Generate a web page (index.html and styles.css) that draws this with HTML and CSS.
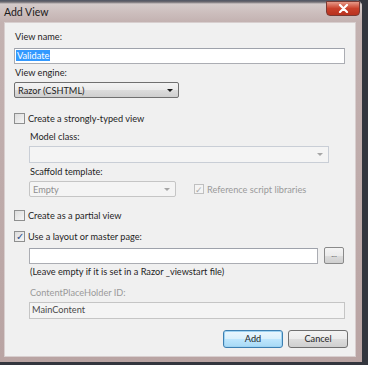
FILE: index.html
```html
<!DOCTYPE html>
<html lang="en">
<head>
    <meta charset="UTF-8">
    <title>Add View</title>
    <link rel="stylesheet" href="styles.css">
</head>
<body>
    <div class="window">
        <div class="titlebar">
            <span class="title">Add View</span>
            <span class="close-btn">
                <svg width="11" height="9" viewBox="0 0 11 9"><path d="M2 1 L9 8 M9 1 L2 8" stroke="#fff" stroke-width="2.2" stroke-linecap="round"/></svg>
            </span>
        </div>
        <div class="client">
            <div class="label lbl-viewname">View name:</div>
            <div class="textbox tb-name"><span class="selected">Validate</span></div>

            <div class="label lbl-engine">View engine:</div>
            <div class="dropdown dd-engine">
                <span>Razor (CSHTML)</span>
                <span class="arrow"></span>
            </div>

            <div class="check-row cr-typed">
                <span class="checkbox"></span>
                <span>Create a strongly-typed view</span>
            </div>

            <div class="indent">
                <div class="label lbl-model">Model class:</div>
                <div class="combo disabled">
                    <span class="arrow light"></span>
                </div>
                <div class="label lbl-scaffold">Scaffold template:</div>
                <div class="scaffold-row">
                    <div class="dropdown dd-scaffold disabled">
                        <span>Empty</span>
                        <span class="arrow light"></span>
                    </div>
                    <div class="check-row dim">
                        <span class="checkbox small checked-dim">&#10003;</span>
                        <span>Reference script libraries</span>
                    </div>
                </div>
            </div>

            <div class="check-row cr-partial">
                <span class="checkbox"></span>
                <span>Create as a partial view</span>
            </div>
            <div class="check-row cr-layout">
                <span class="checkbox checked">&#10003;</span>
                <span>Use a layout or master page:</span>
            </div>

            <div class="indent">
                <div class="layout-row">
                    <div class="textbox tb-layout"></div>
                    <div class="browse-btn">...</div>
                </div>
                <div class="label lbl-hint">(Leave empty if it is set in a Razor _viewstart file)</div>
                <div class="label lbl-cph">ContentPlaceHolder ID:</div>
                <div class="textbox tb-cph">MainContent</div>
            </div>

            <div class="buttons">
                <div class="btn btn-add">Add</div>
                <div class="btn">Cancel</div>
            </div>
        </div>
    </div>
</body>
</html>
```

FILE: styles.css
```css
body {
    margin: 0;
    background: #33363e;
    font-family: Lato, "Noto Sans", sans-serif;
    font-size: 9.2px;
    color: #1e1e1e;
}
.window {
    width: 362px;
    height: 362px;
    background: linear-gradient(to bottom, #c4b3b2, #b9a4a3);
    border-radius: 0 6px 0 0;
    display: flex;
    flex-direction: column;
}
.titlebar {
    height: 22px;
    display: flex;
    align-items: center;
    justify-content: space-between;
    background: linear-gradient(to bottom, #4d5462 0, #6d6a70 2px, #d4cbca 4px, #cdbfbe 12px, #c3b2b1 22px);
    border-radius: 0 6px 0 0;
}
.title {
    margin-left: 4px;
    margin-top: 2px;
    color: #1a1a1a;
    font-size: 10.5px;
}
.close-btn {
    width: 32px;
    height: 13px;
    margin-right: 2px;
    margin-top: -6px;
    border-radius: 0 0 4px 4px;
    background: linear-gradient(to bottom, #e79a88, #c9412b 50%, #b8321f);
    border: 1px solid #7a3a33;
    display: flex;
    align-items: center;
    justify-content: center;
}
.client {
    flex: 1;
    margin: 0 6px 5px 4px;
    background: #f0f0f0;
    border: 1px solid #d8cfcf;
    padding-left: 9px;
    padding-top: 7px;
    box-sizing: border-box;
}
.label {
    height: 14px;
    line-height: 14px;
    padding-left: 1px;
}
.textbox {
    height: 16px;
    border: 1px solid #abadb3;
    border-top-color: #9ea2ab;
    background: #fff;
    box-sizing: border-box;
    line-height: 14px;
    padding-left: 2px;
}
.selected {
    background: #3399ff;
    color: #fff;
    padding: 0 1px;
    margin-left: -1px;
}
.tb-name { width: 331px; margin-top: 4px; }
.lbl-engine { margin-top: 2px; }
.dropdown {
    height: 16px;
    border: 1px solid #707070;
    border-radius: 2px;
    background: linear-gradient(to bottom, #f3f3f3, #ebebeb 50%, #dcdcdc 51%, #cfcfcf);
    box-sizing: border-box;
    display: flex;
    align-items: center;
    justify-content: space-between;
    padding: 0 5px 0 3px;
}
.dd-engine { width: 165px; margin-top: 2px; }
.arrow {
    width: 0;
    height: 0;
    border-left: 3px solid transparent;
    border-right: 3px solid transparent;
    border-top: 3px solid #1a1a1a;
}
.arrow.light { border-top-color: #a6a6a6; }
.check-row {
    display: flex;
    align-items: center;
    height: 14px;
    gap: 3px;
}
.checkbox {
    width: 11px;
    height: 11px;
    border: 1px solid #8e8f8f;
    background: linear-gradient(135deg, #dcdcdc, #f6f6f6);
    box-sizing: border-box;
    font-size: 10px;
    line-height: 9px;
    text-align: center;
    color: #2a4a8a;
}
.cr-typed { margin-top: 13px; }
.indent { padding-left: 15px; }
.lbl-model { margin-top: 5px; }
.combo {
    width: 300px;
    height: 17px;
    margin-top: 2px;
    border: 1px solid #c9ced6;
    background: #f4f4f4;
    box-sizing: border-box;
    display: flex;
    align-items: center;
    justify-content: flex-end;
    padding-right: 5px;
}
.lbl-scaffold { margin-top: 2px; }
.scaffold-row {
    display: flex;
    align-items: center;
    margin-top: 2px;
    gap: 18px;
}
.dd-scaffold {
    width: 147px;
    background: #f4f4f4;
    border-color: #c5c5c5;
    color: #8f8f8f;
}
.dim { color: #9a9a9a; }
.checkbox.small {
    width: 10px;
    height: 10px;
    border-color: #c0c0c0;
    background: #f4f4f4;
    color: #a9a9a9;
    font-size: 9px;
}
.cr-partial { margin-top: 11px; }
.cr-layout { margin-top: 7px; }
.layout-row {
    display: flex;
    align-items: center;
    margin-top: 4px;
    gap: 6px;
}
.tb-layout { width: 289px; }
.browse-btn {
    width: 20px;
    height: 17px;
    border: 1px solid #8a8a8a;
    border-radius: 2px;
    background: linear-gradient(to bottom, #f4f4f4, #ebebeb 50%, #dddddd 51%, #cfcfcf);
    box-sizing: border-box;
    font-size: 8px;
    line-height: 12px;
    text-align: center;
    color: #555;
}
.lbl-hint { margin-top: 1px; }
.lbl-cph { margin-top: 7px; color: #9a9a9a; }
.tb-cph {
    width: 316px;
    height: 17px;
    margin-top: 2px;
    background: #f4f4f4;
    border-color: #c5c5c5;
    color: #4a4a4a;
}
.buttons {
    display: flex;
    justify-content: flex-end;
    gap: 5px;
    margin-top: 11px;
    padding-right: 7px;
}
.btn {
    width: 60px;
    height: 18px;
    border: 1px solid #707070;
    border-radius: 3px;
    background: linear-gradient(to bottom, #f3f3f3, #ebebeb 50%, #dddddd 51%, #cfcfcf);
    box-sizing: border-box;
    text-align: center;
    line-height: 15px;
}
.btn-add {
    border-color: #3c7fb1;
    background: linear-gradient(to bottom, #eaf6fd, #d9f0fc 50%, #bee6fd 51%, #a7d9f5);
    box-shadow: inset 0 0 0 1px #9fd3f2;
}
```
